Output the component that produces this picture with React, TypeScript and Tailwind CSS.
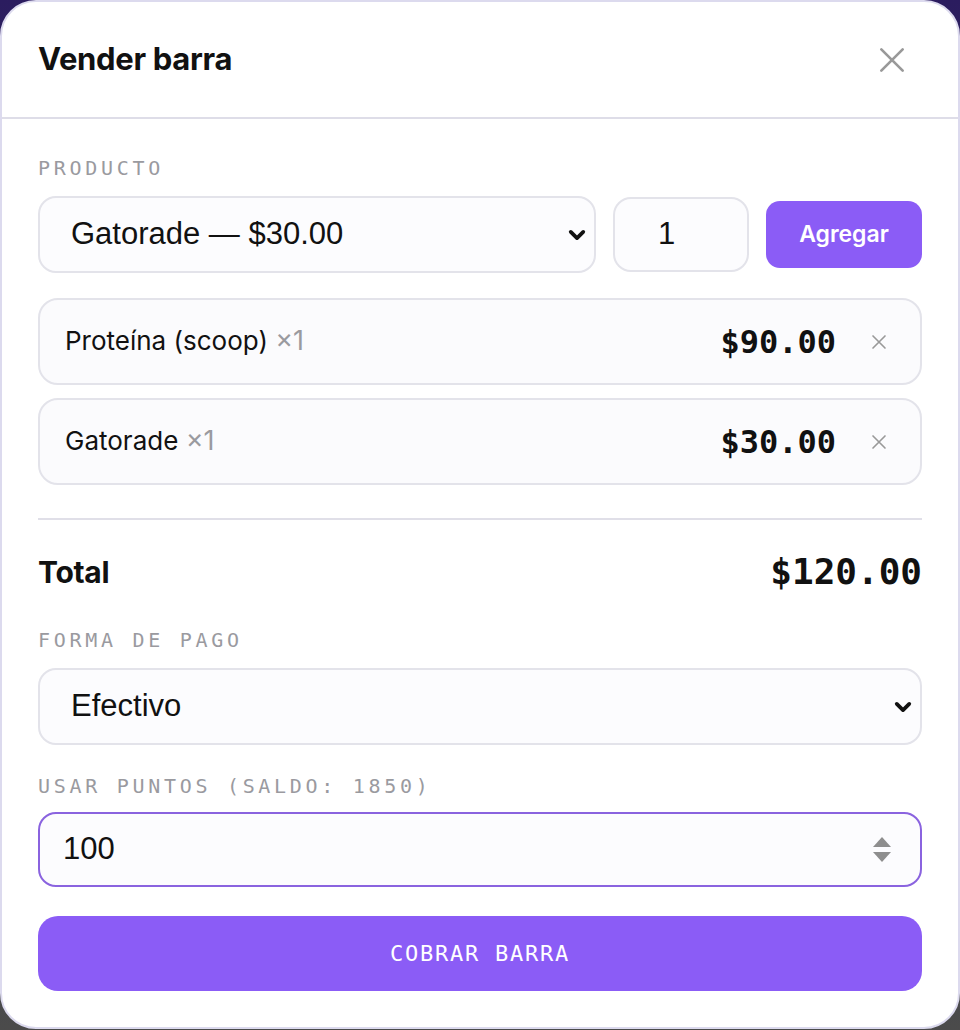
import React, { useState } from 'react';

const mono = "font-['DejaVu_Sans_Mono','Liberation_Mono',monospace]";
const sans = "font-['Inter','Noto_Sans',sans-serif]";
const arial = "font-['Liberation_Sans',Arial,sans-serif]";

function CloseIcon({ className }: { className?: string }) {
  return (
    <svg viewBox="0 0 24 24" className={className} fill="none" stroke="currentColor" strokeLinecap="round">
      <path d="M4 4 L20 20 M20 4 L4 20" />
    </svg>
  );
}

function Chevron() {
  return (
    <svg viewBox="0 0 16 16" className="w-[20px] h-[20px]" fill="none" stroke="#111" strokeWidth="3" strokeLinecap="round" strokeLinejoin="round">
      <path d="M3 5.5 L8 10.5 L13 5.5" />
    </svg>
  );
}

function Label({ children }: { children: React.ReactNode }) {
  return (
    <div className={`${mono} text-[20px] leading-[24px] tracking-[0.185em] text-[#9a9a9f] uppercase`}>
      {children}
    </div>
  );
}

export default function App() {
  const [items] = useState([
    { name: 'Proteína (scoop)', qty: 1, price: '$90.00' },
    { name: 'Gatorade', qty: 1, price: '$30.00' },
  ]);

  return (
    <div className="h-[1030px] w-[960px] bg-gradient-to-b from-[#2b1c5f] to-[#4b4b4b] overflow-hidden">
      <div className="h-[1029px] w-full bg-white rounded-[36px] border-2 border-[#dcdaee] flex flex-col">
        {/* header */}
        <div className="h-[117px] flex items-center justify-between px-[36px] border-b-2 border-[#dedde8]">
          <h2 className={`${sans} text-[31px] font-bold text-[#111] tracking-[-0.01em]`}>Vender barra</h2>
          <CloseIcon className="w-[32px] h-[32px] text-[#999] mr-[14px] [stroke-width:2]" />
        </div>

        {/* body */}
        <div className="px-[36px] pt-[37px] flex flex-col">
          <Label>Producto</Label>

          <div className="mt-[16px] flex items-center gap-[17px]">
            <div className="flex-1 h-[77px] rounded-[18px] border-2 border-[#e3e3ea] bg-[#fcfcfe] flex items-center justify-between pl-[31px] pr-[7px]">
              <span className={`${arial} text-[31px] text-[#111]`}>Gatorade — $30.00</span>
              <Chevron />
            </div>
            <div className="w-[136px] h-[75px] rounded-[18px] border-2 border-[#e3e3ea] bg-[#fcfcfe] flex items-center pl-[43px]">
              <span className={`${arial} text-[31px] text-[#111]`}>1</span>
            </div>
            <button className={`${sans} w-[156px] h-[67px] rounded-[14px] bg-[#8b5cf6] text-white text-[23px] font-semibold`}>
              Agregar
            </button>
          </div>

          <div className="mt-[25px] flex flex-col gap-[13px]">
            {items.map((it) => (
              <div
                key={it.name}
                className="h-[87px] rounded-[20px] border-2 border-[#e3e3ea] bg-[#fbfbfd] flex items-center pl-[25px] pr-[32px]"
              >
                <span className={`${sans} text-[26px] text-[#111] flex-1`}>
                  {it.name} <span className="text-[#9a9a9f] text-[27px]">×{it.qty}</span>
                </span>
                <span className={`${mono} text-[32px] font-bold text-[#111]`}>{it.price}</span>
                <CloseIcon className="ml-[34px] w-[18px] h-[18px] text-[#999] [stroke-width:2.2]" />
              </div>
            ))}
          </div>

          <div className="mt-[33px] h-[2px] bg-[#e0dfe8]" />

          <div className="mt-[32px] h-[40px] flex items-center justify-between">
            <span className={`${sans} text-[30px] font-bold text-[#111] tracking-[-0.01em]`}>Total</span>
            <span className={`${mono} text-[36px] font-bold text-[#111]`}>$120.00</span>
          </div>

          <div className="mt-[36px]">
            <Label>Forma de pago</Label>
          </div>
          <div className="mt-[16px] h-[77px] rounded-[18px] border-2 border-[#e3e3ea] bg-[#fcfcfe] flex items-center justify-between pl-[31px] pr-[7px]">
            <span className={`${arial} text-[31px] text-[#111]`}>Efectivo</span>
            <Chevron />
          </div>

          <div className="mt-[29px]">
            <Label>Usar puntos (saldo: 1850)</Label>
          </div>
          <div className="mt-[14px] h-[75px] rounded-[18px] border-2 border-[#8a63df] bg-[#fcfcfe] flex items-center justify-between pl-[23px] pr-[28px]">
            <span className={`${arial} text-[31px] text-[#111]`}>100</span>
            <svg viewBox="0 0 20 28" className="w-[20px] h-[28px]" fill="#8e8e8e">
              <path d="M10 1 L19 11 L1 11 Z" />
              <path d="M1 16 L19 16 L10 26 Z" />
            </svg>
          </div>

          <button className={`${mono} mt-[29px] h-[75px] rounded-[20px] bg-[#8b5cf6] text-white text-[22px] tracking-[0.08em]`}>
            COBRAR BARRA
          </button>
        </div>
      </div>
    </div>
  );
}
